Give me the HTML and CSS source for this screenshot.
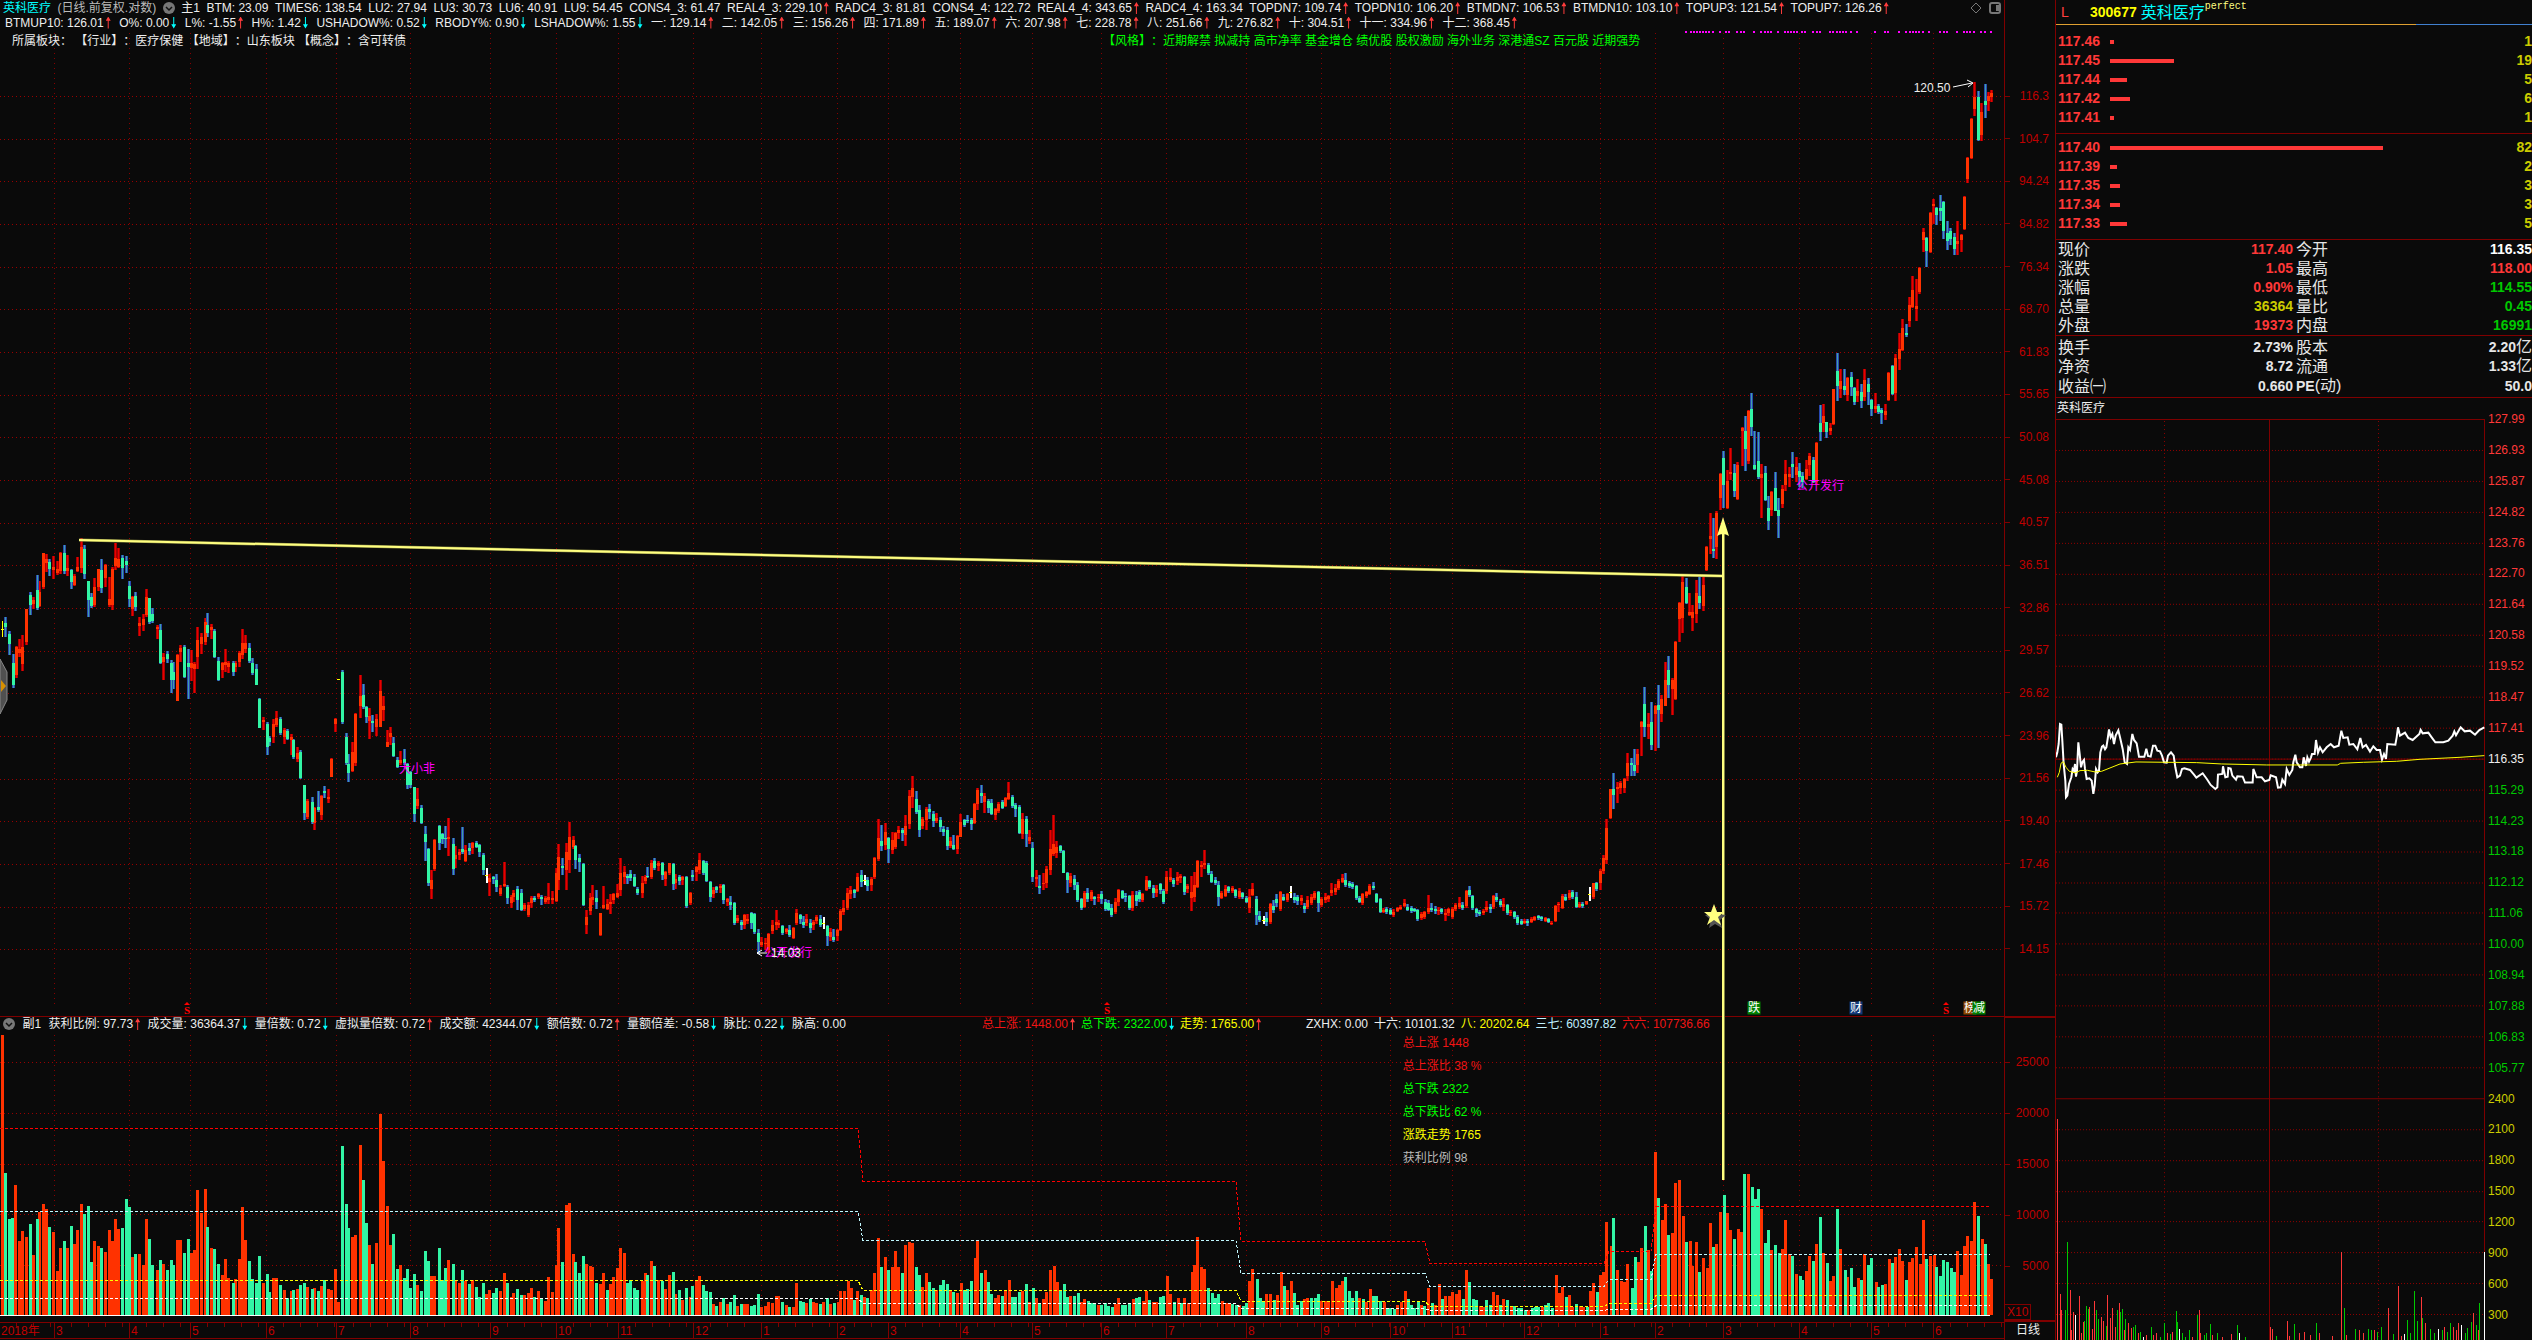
FILE: index.html
```html
<!DOCTYPE html>
<html lang="zh-CN">
<head>
<meta charset="utf-8">
<title>英科医疗 300677 日线</title>
<link rel="stylesheet" href="styles.css">
</head>
<body>
<main class="main">
  <section class="price">
    <header class="bar">
      <div class="readings top"><b class="stock">英科医疗</b><span class="soft">(日线.前复权.对数)</span><button class="fold" aria-label="主图指标"><svg viewBox="0 0 12 12"><circle cx="6" cy="6" r="6" fill="#777"/><path d="M3 5l3 3 3-3" fill="none" stroke="#111" stroke-width="1.5"/></svg></button><span>主1</span><span>BTM: 23.09</span><span>TIMES6: 138.54</span><span>LU2: 27.94</span><span>LU3: 30.73</span><span>LU6: 40.91</span><span>LU9: 54.45</span><span>CONS4_3: 61.47</span><span>REAL4_3: 229.10<i class="up"></i></span><span>RADC4_3: 81.81</span><span>CONS4_4: 122.72</span><span>REAL4_4: 343.65<i class="up"></i></span><span>RADC4_4: 163.34</span><span>TOPDN7: 109.74<i class="up"></i></span><span>TOPDN10: 106.20<i class="up"></i></span><span>BTMDN7: 106.53<i class="up"></i></span><span>BTMDN10: 103.10<i class="up"></i></span><span>TOPUP3: 121.54<i class="up"></i></span><span>TOPUP7: 126.26<i class="up"></i></span></div>
      <div class="tools">
        <button aria-label="标记"><svg viewBox="0 0 12 12"><path d="M6 1l5 5-5 5-5-5z" fill="none" stroke="#777"/></svg></button>
        <button aria-label="侧栏"><svg viewBox="0 0 12 12"><rect x="1" y="1" width="10" height="10" rx="2" fill="none" stroke="#777" stroke-width="2"/><path d="M7 3h3v6h-3z" fill="#777"/></svg></button>
      </div>
      <div class="readings second"><span>BTMUP10: 126.01<i class="up"></i></span><span>O%: 0.00<i class="down"></i></span><span>L%: -1.55<i class="up"></i></span><span>H%: 1.42<i class="down"></i></span><span>USHADOW%: 0.52<i class="down"></i></span><span>RBODY%: 0.90<i class="down"></i></span><span>LSHADOW%: 1.55<i class="down"></i></span><span>一: 129.14<i class="up"></i></span><span>二: 142.05<i class="up"></i></span><span>三: 156.26<i class="up"></i></span><span>四: 171.89<i class="up"></i></span><span>五: 189.07<i class="up"></i></span><span>六: 207.98<i class="up"></i></span><span>七: 228.78<i class="up"></i></span><span>八: 251.66<i class="up"></i></span><span>九: 276.82<i class="up"></i></span><span>十: 304.51<i class="up"></i></span><span>十一: 334.96<i class="up"></i></span><span>十二: 368.45<i class="up"></i></span></div>
    </header>
    <div class="plot">
      <svg id="price" class="chart" viewBox="0 30 2004 986" preserveAspectRatio="none"></svg>
      <div class="sector"><span>所属板块： 【行业】：医疗保健 【地域】：山东板块 【概念】：含可转债</span><span class="lime">【风格】：近期解禁 拟减持 高市净率 基金增仓 绩优股 股权激励 海外业务 深港通SZ 百元股 近期强势</span></div>
      <div id="notes"></div>
    </div>
  </section>
  <ol class="axis" id="priceAxis"></ol>

  <section class="volume">
    <svg id="volume" class="chart" viewBox="0 1016 2004 306" preserveAspectRatio="none"></svg>
    <div class="sub">
      <div class="readings"><button class="fold" aria-label="副图指标"><svg viewBox="0 0 12 12"><circle cx="6" cy="6" r="6" fill="#777"/><path d="M3 5l3 3 3-3" fill="none" stroke="#111" stroke-width="1.5"/></svg></button><span>副1</span><span>获利比例: 97.73<i class="up"></i></span><span>成交量: 36364.37<i class="down"></i></span><span>量倍数: 0.72<i class="down"></i></span><span>虚拟量倍数: 0.72<i class="up"></i></span><span>成交额: 42344.07<i class="down"></i></span><span>额倍数: 0.72<i class="up"></i></span><span>量额倍差: -0.58<i class="down"></i></span><span>脉比: 0.22<i class="down"></i></span><span>脉高: 0.00</span></div>
      <div class="readings trend"><span class="red">总上涨: 1448.00<i class="up"></i></span><span class="lime">总下跌: 2322.00<i class="down"></i></span><span class="yellow">走势: 1765.00<i class="up"></i></span></div>
      <div class="readings levels"><span>ZXHX: 0.00</span><span>十六: 10101.32</span><span class="yellow">八: 20202.64</span><span class="ice">三七: 60397.82</span><span class="red">六六: 107736.66</span></div>
    </div>
    <ul class="summary">
      <li class="red">总上涨 1448</li><li class="red">总上涨比 38 %</li><li class="lime">总下跌 2322</li><li class="lime">总下跌比 62 %</li><li class="yellow">涨跌走势 1765</li><li class="grey">获利比例 98</li>
    </ul>
  </section>
  <div class="axis volaxis"><ol><li>25000</li><li>20000</li><li>15000</li><li>10000</li><li>5000</li></ol><span class="unit">X10</span></div>

  <ol class="dates" id="dates"></ol>
  <div class="period">日线</div>
</main>

<aside class="quote">
  <header class="name"><span class="flag">L</span><strong>300677</strong><h1>英科医疗</h1><sup>perfect</sup></header>
  <ul class="book" id="asks"></ul>
  <ul class="book" id="bids"></ul>
  <table class="stats">
    <tbody>
      <tr><th>现价</th><td class="r">117.40</td><th>今开</th><td class="w">116.35</td></tr>
      <tr><th>涨跌</th><td class="r">1.05</td><th>最高</th><td class="r">118.00</td></tr>
      <tr><th>涨幅</th><td class="r">0.90%</td><th>最低</th><td class="g">114.55</td></tr>
      <tr><th>总量</th><td class="y">36364</td><th>量比</th><td class="g">0.45</td></tr>
      <tr><th>外盘</th><td class="r">19373</td><th>内盘</th><td class="g">16991</td></tr>
    </tbody>
    <tbody class="basics">
      <tr><th>换手</th><td>2.73%</td><th>股本</th><td>2.20<span>亿</span></td></tr>
      <tr><th>净资</th><td>8.72</td><th>流通</th><td>1.33<span>亿</span></td></tr>
      <tr><th>收益㈠</th><td>0.660</td><th><b>PE</b>(动)</th><td>50.0</td></tr>
    </tbody>
  </table>
  <h2>英科医疗</h2>
  <div class="intraday">
    <svg id="intraday" class="chart" viewBox="2056 418 429 922" preserveAspectRatio="none"></svg>
    <ol id="intradayAxis"></ol>
  </div>
</aside>
<script src="chart.js"></script>
</body>
</html>
```
FILE: styles.css
```css
* { box-sizing: border-box; margin: 0; padding: 0; }
html, body { height: 100%; }
body {
  display: grid;
  grid-template-columns: minmax(0, 1fr) 477px;
  background: #0a0a0a;
  color: #eee;
  font: 12px/14px "Liberation Sans", "Noto Sans CJK SC", sans-serif;
  overflow: hidden;
}
ol, ul { list-style: none; }
button { background: none; border: 0; color: inherit; }
.red { color: #f01414; }
.lime { color: #0f0; }
.yellow { color: #ff0; }
.ice { color: #c0f0ff; }
.grey { color: #bbb; }

.main {
  display: grid;
  grid-template-columns: minmax(0, 1fr) 51px;
  grid-template-rows: minmax(0, 1016fr) minmax(0, 306fr) 18px;
  height: 100vh;
  min-width: 0;
}
.price { display: flex; flex-direction: column; min-height: 0; }
.bar {
  display: grid;
  grid-template-columns: minmax(0, 1fr) auto;
  height: 30px;
  padding: 1px 3px 0;
}
.readings { display: flex; align-items: center; gap: 7px; height: 14px; white-space: nowrap; }
.readings.top { gap: 4px; width: 1886px; justify-content: space-between; }
.readings.second { width: 1514px; justify-content: space-between; padding-left: 2px; }
.stock { color: #0ff; font-weight: 400; }
.soft { color: #bbb; }
.fold { width: 12px; height: 12px; flex: none; }
.fold svg, .tools svg { display: block; width: 12px; height: 12px; }
.tools { display: flex; gap: 7px; padding: 1px 0; }
.up, .down {
  display: inline-block;
  width: 5px;
  height: 12px;
  margin-left: 2px;
  vertical-align: -2px;
}
.up { background: #ff3c3c; clip-path: polygon(50% 0, 100% 35%, 60% 35%, 60% 100%, 40% 100%, 40% 35%, 0 35%); }
.down { background: #0ff; clip-path: polygon(40% 0, 60% 0, 60% 65%, 100% 65%, 50% 100%, 0 65%, 40% 65%); }

.plot, .volume { display: grid; position: relative; min-height: 0; flex: 1; grid-template: minmax(0, 1fr) / minmax(0, 1fr); }
.plot > *, .volume > * { grid-area: 1 / 1; }
.chart { display: block; width: 100%; height: 100%; min-height: 0; min-width: 0; }
.sector {
  display: grid;
  grid-template-columns: 1091fr 901fr;
  align-self: start;
  padding: 4px 0 0 12px;
  white-space: pre;
  text-spacing-trim: space-all;
}
.note { position: absolute; white-space: nowrap; transform: translate(-50%, -50%); }
.note.tag { width: 13px; height: 13px; line-height: 13px; color: #fff; text-align: center; }
.note.signal { color: #f00; font: bold 11px/10px "Liberation Serif", serif; }
.magenta { color: #f0f; }
.green { background: #008000; }
.navy { background: #103878; }
.brown { background: #904800; }

.axis { border-left: 1px solid #800000; color: #c00000; }
#priceAxis {
  display: flex;
  flex-direction: column;
  justify-content: space-between;
  padding: 89px 6px 60px 0;
  text-align: right;
}
.axis li { display: flex; justify-content: space-between; align-items: center; }
.axis li::before { content: ""; width: 5px; height: 1px; background: #800000; }
.volaxis {
  display: flex;
  flex-direction: column;
  justify-content: space-between;
  border: 1px solid #800000;
  border-width: 2px 0 2px 1px;
}
.volaxis ol { display: flex; flex-direction: column; gap: 37px; padding: 37px 6px 0 0; }
.unit { align-self: flex-start; border: 1px solid #800000; border-left: 0; padding: 0 2px; }

.sub {
  display: grid;
  grid-template-columns: 979fr 324fr 698fr;
  align-self: start;
  padding: 1px 0 0 3px;
}
.sub .readings { gap: 6px; }
.sub .readings:first-child { width: 843px; gap: 0; justify-content: space-between; }
.volume { box-shadow: inset 0 1px #800000; }
.summary {
  display: grid;
  gap: 9px;
  align-self: start;
  margin: 20px 0 0 70%;
}
.dates {
  display: grid;
  height: 17px;
  border: solid #800000;
  border-width: 1px 0;
  color: #c00000;
}
.dates li {
  border-left: 1px solid #800000;
  padding-left: 1px;
  line-height: 16px;
  background: linear-gradient(90deg, transparent 16px, #800000 16px) 0 0 / 17px 4px repeat-x;
  white-space: nowrap;
}
.dates li:first-child { border-left: 0; }
.period { border-left: 1px solid #800000; padding-left: 11px; line-height: 16px; }

.quote {
  display: flex;
  flex-direction: column;
  height: 100vh;
  border-left: 1px solid #800000;
  font: 14px/19px "Liberation Sans", "Noto Sans CJK SC", sans-serif;
}
.name {
  display: flex;
  align-items: center;
  flex: none;
  height: 25px;
  padding-left: 5px;
  border-bottom: 1px solid;
  border-image: linear-gradient(90deg, #e0a030 359px, #4080d0 359px) 1;
}
.flag { width: 29px; color: #ff4040; }
.name strong { color: #ff0; }
.name h1 { margin-left: 4px; color: #0ff; font-size: 16px; font-weight: 400; }
.name sup { color: #ffff80; font: 10px/14px "Liberation Mono", monospace; align-self: flex-start; }
.book {
  padding: 7px 0 6px 2px;
  border-bottom: 1px solid #800000;
  font-weight: 700;
  color: #ff3838;
}
.book + .book { padding: 4px 0 6px 2px; }
.book li { display: grid; grid-template-columns: 52px 1fr auto; align-items: center; height: 19px; }
.bar-size { height: 4px; background: #ff3838; }
.book output { color: #cc0; }
.stats { width: 100%; border-spacing: 0; table-layout: fixed; }
.stats tr { height: 19px; line-height: 19px; }
.stats tr:last-child > * { border-bottom: 1px solid #800000; }
.stats .basics tr:first-child > * { padding-top: 2px; }
.stats .basics tr:last-child > * { padding-bottom: 1px; }
.stats th { width: 78px; padding-left: 2px; text-align: left; font-size: 16px; font-weight: 400; color: #e6e6e6; white-space: nowrap; }
.stats th b { font-size: 14px; }
.stats td { text-align: right; font-weight: 700; color: #e6e6e6; }
.stats td:nth-child(2) { padding-right: 1px; }
.stats td span { font-size: 16px; font-weight: 400; line-height: 16px; }
.stats .r { color: #ff3838; }
.stats .g { color: #00c800; }
.stats .y { color: #cc0; }
.stats .w { color: #fff; }
.quote h2 { flex: none; height: 21px; padding-left: 1px; font-size: 12px; line-height: 21px; font-weight: 400; }
.intraday {
  display: grid;
  grid-template: minmax(0, 1fr) / minmax(0, 1fr) 47px;
  flex: 1;
  min-height: 0;
}
#intradayAxis {
  display: flex;
  flex-direction: column;
  justify-content: space-between;
  margin-top: -7px;
  padding: 0 0 18px 3px;
  font-size: 12px;
  line-height: 14px;
}
#intradayAxis .r { color: #ff3838; }
#intradayAxis .g { color: #00c800; }
#intradayAxis .y { color: #cc0; }
```
FILE: chart.js
```js
const byId = id => document.getElementById(id);

// Each run: origin, units per pixel, then "colour+x high bodyTop bodyBottom low".
// Colour w is a flat day: "w+x high low".
const candleRuns = [
  { x: 0, y: 500, kx: 1.823, ky: 3, data: "y4 363 410,g10 350 370 382 412,g16 392 402 432 465,g23 462 490 556 563,r29 438 440 525 533,r34 417 447 458 470,r41 405 440 492 512,r47 326 328 425 434,g54 276 285 315 345,r60 290 300 312 328,g67 225 270 323 330,r72 243 276 318 321,r78 158 160 262 266,r84 162 178 190 215,g90 177 185 208 228,r97 168 201 210 237,r103 183 207 219 226,r110 155 160 214 222,g116 134 160 212 221,r123 165 203 213 228,g129 207 210 245 267,r135 222 228 254 258,r141 170 200 213 216,r147 115 140 203 218,g154 134 147 222 236,g160 242 244 300 350,g166 280 292 319 324,r172 234 261 316 321,r178 207 207 262 273,g185 177 210 263 278,r191 192 195 233 262,r198 230 297 314 320,r204 200 207 316 330,r210 129 175 198 210,r216 145 178 200 205,g223 165 175 205 237,g229 168 184 195 219,g235 243 258 296 321,r241 288 290 328 347,g247 276 289 320 333,r254 350 368 377 408,r260 342 356 375 392,r267 267 291 344 350,g272 293 295 365 372,g278 323 342 363 370,r286 374 380 388 416,g291 372 390 488 492,r298 458 470 485 540,g304 453 462 476 490,g311 480 490 540 580,g316 487 517 540 567,r323 462 465 603 603,r329 434 444 455 487,g335 434 440 530 533,g342 446 490 502 597,r348 449 490 505 542,r354 486 492 508 579,r360 381 420 470 508,r367 399 410 432 461,r373 354 366 425 434,g378 339 375 398 410,r385 372 382 390 416,g391 387 392 472 474,g398 471 484 540 542,r404 486 490 510 534,r410 447 485 494 517,r416 483 490 500 518,g424 483 490 516 528,r429 483 488 500 517,r435 453 459 487 501,r442 387 430 464 476,r447 405 428 448 460,g454 428 444 484 489,g460 474 488 520 526,g467 491 508 554 554,g473 593 596 683 684,r479 651 660 667 690,g486 665 672 740 765,g491 708 713 725 737,r498 657 672 712 730,r504 633 655 674 681,g511 651 657 698 704,r517 684 690 710 731,g523 686 694 717 720,r530 702 711 720 765,g535 716 719 772 776,r542 741 760 778 785,g547 750 757 833 837,g555 855 856 940 960,r560 897 902 950 956,g568 891 906 966 972,r573 921 925 968 990,g579 873 921 930 936,r586 885 887 945 960,g591 858 873 880 893,r598 867 891 898 908,r604 773 776 830 831,r611 653 656 672 695,y617 537 540,g624 510 515 665 671,g630 699 712 788 795,g635 762 792 820 846,r642 726 755 812 816,r648 639 641 790 797,r656 525 588 617 654,g661 551 584 620 627,g668 617 620 650 668,r673 624 647 662 717,g679 645 663 670 695,r686 642 657 680 708,r692 540 573 680 681,r698 588 618 630 664,r705 690 727 740 741,r711 681 700 711 735,g717 711 728 767 771,g724 770 780 800 804,r730 752 780 790 795,g736 747 778 790 794,g742 789 792 855 867,g748 813 815 855 863,g755 860 862 942 966,r761 863 898 918 928,g768 914 925 970 972,g774 978 1003 1025 1083,g780 1043 1047 1150 1158,r786 1110 1140 1168 1197,r792 1017 1019 1108 1113,g800 974 978 1030 1050,g805 999 1003 1018 1033,g812 978 1013 1015 1044,r817 954 1010 1018 1068,g825 1013 1032 1108 1125,r830 1038 1065 1078 1104,r836 1047 1055 1065 1080,g843 981 1047 1057 1063,r848 1036 1050 1083 1087,g855 1028 1045 1053 1065,r861 1025 1030 1045 1062,g868 1022 1030 1040 1044,g874 1032 1035 1055 1071,g880 1059 1065 1110 1125,w886 1104 1149,r892 1121 1135 1146 1188,g899 1128 1130 1137 1152,g905 1122 1140 1160 1175,r912 1155 1165 1182 1187,r918 1086 1153 1157 1162,g925 1155 1160 1195 1212,r931 1184 1190 1210 1224,r936 1170 1180 1190 1206,g943 1158 1168 1200 1230,g949 1167 1180 1230 1233,r956 1209 1215 1228 1233,r962 1206 1215 1245 1251,r968 1188 1193 1208 1225,g974 1188 1193 1200 1205,r980 1179 1183 1190 1197,g987 1184 1190 1198 1215,r993 1188 1195 1205 1211,r999 1149 1190 1200 1212,r1006 1173 1193 1200 1211,r1013 1104 1120 1204 1206,r1018 1032 1071 1140 1170,g1025 1073 1097 1105 1125,r1031 1029 1055 1110 1170,r1037 966 1010 1080 1119,r1044 1008 1020 1040 1047,g1049 1034 1038 1080 1107,g1056 1062 1073 1085 1117,g1062 1089 1092 1215 1218,r1069 1230 1250 1275 1302,r1075 1179 1195 1233 1245,r1080 1155 1190 1200 1215,g1087 1170 1195 1205 1228,r1093 1239 1240 1305 1308,r1100 1158 1215 1225 1228,r1106 1197 1212 1228 1231,r1112 1182 1205 1213 1243,r1118 1179 1183 1200 1212,r1125 1152 1180 1190 1194,r1131 1074 1120 1170 1188,r1137 1098 1116 1130 1152,g1143 1122 1127 1135 1152,g1149 1110 1122 1135 1143,g1156 1122 1130 1158 1162,g1162 1161 1166 1180 1185,r1170 1129 1150 1180 1194,r1175 1126 1130 1143 1152,g1180 1101 1128 1131 1135,r1187 1080 1090 1130 1137,g1193 1074 1082 1105 1110,r1200 1083 1088 1097 1113,g1206 1086 1090 1125 1140,r1213 1113 1117 1138 1158,r1219 1089 1090 1120 1125,g1226 1088 1092 1152 1170,r1231 1122 1138 1148 1168,g1237 1125 1132 1143 1155,r1243 1128 1130 1140 1155,g1250 1128 1132 1218 1224,r1257 1176 1180 1210 1214,g1262 1110 1125 1130 1143,r1269 1098 1102 1115 1142,r1275 1059 1080 1110 1123,g1281 1080 1083 1118 1125,g1287 1083 1090 1143 1145,g1294 1143 1145 1192 1206,r1300 1161 1170 1182 1195,g1306 1158 1162 1170 1180,r1312 1152 1158 1165 1178,g1318 1152 1155 1200 1211,r1326 1194 1197 1205 1218,g1331 1187 1205 1215 1231,g1338 1206 1209 1268 1275,r1344 1245 1254 1262 1268,g1350 1260 1265 1275 1290,r1357 1242 1245 1275 1287,r1362 1242 1257 1264 1272,g1369 1236 1240 1268 1287,g1375 1239 1242 1297 1302,g1381 1287 1298 1325 1362,r1388 1311 1325 1335 1340,r1394 1314 1328 1333 1350,r1400 1300 1302 1350 1360,r1407 1260 1275 1293 1302,r1414 1230 1265 1275 1290,r1419 1260 1268 1275 1283,g1426 1275 1278 1300 1305,r1432 1285 1288 1297 1303,g1438 1275 1290 1305 1310,r1445 1282 1284 1313 1316,r1451 1227 1240 1270 1275,g1458 1242 1246 1256 1272,g1463 1248 1265 1275 1284,r1470 1242 1258 1268 1278,g1476 1256 1270 1285 1299,r1482 1260 1265 1275 1290,r1488 1245 1252 1262 1272,g1494 1245 1258 1275 1280,w1500 1251 1287,g1507 1275 1278 1308 1338" },
  { x: 830, y: 750, kx: 3, ky: 3, data: "r1 533 545 562 573,g10 537 560 571 575,r22 536 540 558 573,r31 477 482 541 543,r40 450 475 487 495,r52 414 430 475 480,r61 408 420 432 446,g73 417 420 428 444,r82 369 380 424 426,g94 360 376 395 410,w102 375 405,g112 381 390 408 423,r124 381 387 404 423,r133 320 325 380 386,r145 207 263 328 333,g154 225 273 288 302,r166 219 246 285 299,g175 261 263 298 339,r187 246 270 300 311,r196 246 248 292 298,r205 228 240 250 266,g217 234 240 248 273,r226 195 228 255 287,r238 120 138 222 237,r247 78 114 142 173,g259 123 147 186 192,g268 165 180 240 261,r277 201 207 228 238,r289 171 177 210 239,g298 162 177 186 207,g310 183 192 214 231,r319 189 203 212 218,g331 201 210 232 246,g340 228 238 246 258,g352 231 240 288 300,r361 261 272 288 294,g370 255 286 298 300,r382 255 258 298 311,r391 191 215 260 262,g403 206 210 226 231,g412 195 209 213 220,g424 204 210 222 239,r433 159 162 220 222,r442 114 120 163 179,g454 105 129 138 158,r463 129 138 155 190,g475 147 153 173 188,g484 147 160 192 195,r496 174 178 196 210,r505 156 162 182 188,g517 150 157 175 178,r526 140 144 167 170,r535 96 129 148 150,g547 135 140 168 175,g556 159 165 176 201,g568 165 172 250 252,r577 189 207 252 267,g589 198 207 252 291,r598 240 262 272 281,g607 276 294 382 396,r619 360 380 386 410,g628 375 408 414 432,r640 369 398 402 420,r649 348 358 400 414,r661 240 297 360 375,r670 195 282 312 318,r679 273 290 310 323,g691 285 288 303 308,g700 300 303 368 369,g712 366 370 390 429,r721 369 378 400 411,g733 375 388 405 420,g742 396 405 450 455,g754 444 448 475 480,r763 423 430 470 473,g772 414 430 446 456,r784 420 426 448 452,g793 438 440 448 465,r805 432 440 445 455,g814 423 432 447 462,g826 447 455 478 483,g835 450 460 480 483,g844 462 475 495 501,r856 444 456 486 491,r865 417 420 455 467,g877 420 422 444 447,g886 430 438 442 455,g898 435 438 475 480,r907 423 436 475 483,g919 423 435 452 468,g928 420 425 446 455,r937 429 432 450 455,r949 378 390 420 423,g958 390 392 410 416,g970 405 415 430 444,r979 405 416 428 441,g991 399 403 420 432,g1000 417 422 455 462,r1009 363 380 424 432,r1021 354 380 390 396,g1030 384 390 403 410,r1042 366 380 393 405,r1051 372 378 385 399,g1063 378 380 425 435,r1072 402 408 416 428,r1084 378 426 445 483,r1093 366 405 440 455,r1102 330 333 410 414,r1114 333 345 350 381,r1123 300 340 346 357,g1135 339 345 370 375,g1144 363 372 396 399,g1156 381 390 400 404,g1165 393 405 440 468,r1174 423 430 445 448,r1186 405 418 438 441,g1195 408 412 422 429,r1207 408 415 423 428,g1216 417 420 438 444,r1228 414 423 440 446,g1237 426 430 440 446,g1249 438 444 455 459,r1258 417 440 475 488,r1267 399 416 436 438,g1279 438 446 495 525,g1288 483 498 510 516,w1299 498 522,g1309 486 503 516 527,r1321 459 461 515 521,g1330 450 468 480 488,g1339 432 447 460 470" },
  { x: 1280, y: 560, kx: 3, ky: 3, data: "r1 993 997 1048 1053,g10 1002 1012 1020 1023,r22 999 1003 1020 1025,w30 978 1014,g43 999 1010 1020 1030,g52 1005 1012 1022 1035,r64 1005 1015 1022 1035,g73 1029 1038 1047 1059,r82 1008 1020 1040 1047,r94 1003 1010 1028 1036,r103 993 998 1015 1020,g115 993 997 1030 1056,r124 1011 1018 1035 1041,r136 1000 1012 1020 1029,r145 1005 1009 1018 1025,r154 969 990 1000 1007,r166 972 985 997 1005,r175 957 962 985 990,r187 942 955 965 968,g196 939 960 975 981,g208 963 970 978 984,g217 966 973 980 988,g229 975 978 1015 1020,g238 1008 1015 1025 1029,r247 999 1001 1030 1035,r259 993 997 1007 1013,r268 972 978 1003 1006,g280 966 978 985 990,g289 999 1003 1025 1029,g301 1014 1018 1055 1059,r310 1044 1050 1056 1060,g319 1040 1046 1056 1063,g331 1044 1050 1062 1066,r340 1046 1055 1065 1071,r352 1040 1044 1053 1056,r361 1036 1040 1047 1051,r373 1017 1028 1038 1042,g382 1033 1040 1050 1054,g394 1038 1043 1052 1058,g403 1044 1048 1053 1057,g412 1047 1050 1078 1083,r424 1055 1062 1075 1080,r433 1053 1056 1070 1077,r445 1005 1045 1055 1062,g454 1029 1045 1050 1055,g466 1038 1047 1053 1063,r475 1040 1050 1053 1064,g484 1043 1047 1055 1062,r496 1047 1060 1065 1083,r505 1044 1048 1060 1067,r517 1041 1048 1072 1077,r526 1029 1035 1048 1053,r538 1011 1030 1042 1047,g547 1026 1035 1045 1050,r559 990 993 1038 1045,g568 978 990 1005 1010,g577 1005 1008 1043 1050,g589 1043 1048 1060 1071,g598 1050 1055 1063 1067,r610 1047 1053 1060 1066,r619 1023 1040 1050 1055,g631 1032 1040 1048 1059,r640 1005 1008 1040 1046,g649 999 1010 1020 1025,g661 1017 1022 1035 1042,r670 1014 1033 1040 1054,g682 1032 1035 1060 1065,r691 1050 1055 1060 1067,g703 1053 1055 1070 1077,g712 1065 1070 1090 1095,g724 1078 1084 1091 1095,r733 1078 1084 1088 1092,g742 1078 1083 1090 1098,r754 1071 1078 1085 1090,r763 1068 1070 1080 1083,g775 1065 1068 1075 1080,g784 1068 1072 1078 1082,r796 1070 1075 1083 1087,g805 1074 1078 1085 1088,r814 1084 1088 1093 1095,r826 1035 1037 1082 1086,r835 1026 1032 1036 1055,r847 1002 1008 1045 1047,g856 1002 1010 1020 1023,r868 990 998 1015 1020,g877 990 995 1010 1017,g889 996 1010 1040 1044,r898 1025 1032 1042 1045,g907 1025 1033 1038 1043,r919 1022 1024 1032 1036,w927 981 1023,r940 968 970 1012 1017,g949 966 970 988 993,r961 927 932 970 991,r970 885 893 932 942,r979 777 804 900 911,r991 686 688 775 777,g1000 639 686 705 747,r1012 666 680 688 729,r1021 663 668 683 702,r1033 655 658 684 699,r1042 579 608 648 663,g1054 594 608 615 648,g1063 567 614 632 648,r1072 567 582 616 639,r1084 482 485 500 588,g1093 381 432 500 531,r1105 459 492 502 537,g1114 426 486 556 570,r1126 434 437 462 573,g1135 375 435 450 564,r1144 405 418 462 486,r1156 306 360 437 439,g1165 288 330 375 413,r1177 354 360 387 465,r1186 243 245 418 420,r1198 126 128 178 246,r1207 48 66 174 219,g1219 54 80 130 132,r1228 99 156 164 168,r1237 135 157 173 213,r1249 60 100 163 189,g1258 48 108 128 147,r1270 50 75 138 153" },
  { x: 1640, y: 40, kx: 3, ky: 2.613, data: "r199 1322 1325 1384 1387,r211 1236 1297 1303 1342,g220 1249 1330 1335 1354,r229 1232 1235 1325 1355,r241 1132 1134 1197 1229,g250 1074 1092 1162 1222,r262 1124 1152 1224 1226,r271 1066 1130 1133 1149,g283 1108 1132 1178 1193,r292 1103 1110 1200 1202,r305 1010 1013 1022 1113,g314 983 1021 1070 1125,r323 967 970 1100 1107,g334 923 964 1010 1034,g343 1021 1110 1122 1124,g355 1024 1100 1143 1146,r364 1107 1133 1144 1248,g376 1113 1132 1203 1205,g385 1192 1222 1256 1280,r394 1178 1180 1228 1243,g406 1130 1170 1230 1231,g415 1197 1228 1243 1300,r427 1163 1172 1213 1222,r436 1098 1133 1163 1178,r448 1116 1134 1143 1167,g457 1077 1107 1117 1145,r469 1090 1117 1136 1155,g478 1105 1127 1141 1168,g487 1129 1139 1155 1170,r499 1098 1120 1148 1150,r508 1079 1087 1110 1140,g520 1090 1098 1155 1158,r529 1050 1052 1155 1162,g541 955 1001 1023 1047,r550 951 983 1002 1023,g559 997 999 1024 1040,r571 1001 1014 1022 1031,r580 911 913 1004 1006,g592 818 865 903 942,r601 860 891 911 936,g613 860 904 915 928,r622 880 882 927 943,g634 868 880 908 930,g643 907 909 945 953,r652 885 918 930 946,g664 898 919 943 962,r673 860 889 932 943,g685 883 899 920 953,g694 937 940 964 983,r706 923 957 963 975,g715 951 956 973 976,g724 961 966 975 1003,r736 951 969 980 993,r745 867 869 940 943,g757 849 851 925 928,r766 821 831 922 943,r778 766 807 833 862,r787 729 753 811 813,g799 742 765 771 775,r808 672 693 733 749,r817 616 653 697 700,r829 625 695 702 733,r838 593 595 658 665,r850 491 501 523 553,g859 516 518 551 593,r871 449 451 555 557,r880 416 428 434 481,g889 436 439 457 483,g901 405 438 446 473,g910 420 424 500 519,g922 473 504 524 549,g931 491 500 520 535,g943 504 516 545 563,r952 473 525 534 561,r964 506 510 522 553,r973 407 409 493 496,r982 307 309 362 374,r994 205 207 308 311,r1003 110 149 180 198,g1015 133 149 261 263,r1024 165 187 247 263,g1036 115 159 170 203,r1045 136 146 160 185,r1054 131 139 149 163" }
];

// Each run: origin, units per pixel, then "x colour top".
const volumeRuns = [
  { x: 0, y: 980, kx: 1.823, ky: 3, data: "4r165,10g579,16g717,22g714,28r615,34r783,41r753,47r771,54g732,60r825,67g717,72r696,78r672,84r687,90g741,97r756,103r873,110r804,116g783,123r804,129g738,135r792,141r750,147r672,154g702,160g678,166g846,172r783,178r798,185g804,191r816,198r750,204r783,210r717,216r747,223g744,229g657,235g681,241r831,247g822,254r822,260r855,267r717,272g777,278g855,286r870,291g840,298r852,304g870,311g840,316g855,323r780,329r780,335g819,342g777,348r819,354r810,360r630,367r699,373r627,378g741,385r804,391g807,398g852,404r885,410r837,416r894,424g909,429r897,435r837,442r681,447r780,454g843,460g897,467g909,473g828,479r909,486g882,491g936,498r894,504r894,511g915,517r930,523g954,530r933,535g930,542r927,547g915,555g909,560r921,568g927,573r924,579g933,586r918,591g900,598r927,604r930,611r867,617r966,624g498,630g672,635g744,642r771,648r765,656r495,661g600,668g729,673r795,679g852,686r789,692r402,698r543,705r678,711r795,717g762,724g867,730r855,736g894,742g867,748g924,755g882,761r915,768g933,774g813,780g843,786r888,792r888,800g804,805g900,812g864,817r840,825g852,830r903,836r909,843g870,848r903,855g912,861r900,868g921,874g951,880g909,886r942,892r930,899g939,905g924,912r933,918r879,925g909,931r951,936r939,943g927,949g945,956r945,962r939,968r924,974g951,980r933,987g954,993r963,999r891,1006r936,1013r855,1018r744,1025g846,1031r675,1037r669,1044r822,1049g846,1056g879,1062g828,1069r852,1075r858,1080r861,1087g909,1093r912,1100r879,1106g930,1112r912,1118r891,1125r864,1131r804,1137r819,1143g909,1149g900,1156g924,1162g930,1170r903,1175r879,1180g885,1187r843,1193g858,1200r900,1206g903,1213r927,1219r885,1226g876,1231r942,1237g930,1243r960,1250g924,1257r951,1262g918,1269r903,1275r888,1281g915,1287g933,1294g936,1300r972,1306g978,1312r966,1318g954,1326r972,1331g966,1338g945,1344r978,1350g972,1357r972,1362r972,1369g978,1375g975,1381g942,1388r981,1394r978,1400r966,1407r969,1414r948,1419r948,1426g966,1432r975,1438g981,1445r981,1451r909,1458g963,1463g966,1470r969,1476g957,1482r966,1488r969,1494g972,1500r966,1507g954,1513r972,1520g969,1527r966,1532r933,1538r933,1545r903,1551r924,1557g960,1563r933" },
  { x: 830, y: 980, kx: 3, ky: 3, data: "94g945,102r950,112g955,124r930,133r880,145r775,154g860,166r830,175g870,187r862,196r812,205r860,217g880,226r795,238r785,247r790,259g860,268g885,277r920,289r880,298g905,310g925,319r930,331g915,340g900,352g912,361r930,370g935,382r938" },
  { x: 960, y: 990, kx: 1.912, ky: 3, data: "2r879,8g899,14g897,21g873,28r804,33r750,40g849,47r840,54g876,60g912,67r924,73r915,80g918,86r903,93r870,100g921,106g921,113g906,119r903,126g882,132r936,139g894,145r924,152g939,158r927,165r906,172r840,179r828,185r876,192g903,198g882,205g921,211r918,218g918,225g909,231r936,237r927,244g933,250g939,257g939,264r945,270g945,277g939,283g948,290g951,297r942,303r924,310g945,316g945,323g939,330r927,336g924,343g921,349r933,356r903,362g930,369r936,375r936,382g921,388g918,395r858,402r912,409g936,416r924,422g939,429r924,436r939,443r846,448r825,454r741,461r831,467r837,475g894,481g909,488g924,494g912,501r933,508r939,514r939,521g942,528g945,534r945,541g948,547g939,553r873,559r837,567g867,573g924,580g936,586r912,593r912,600g930,606r915,613r846,619g888,626r900,632r873,639g909,645g945,652g933,658r927,664r924,671g924,678g924,684g912,691r933,698r933,704r933,711r873,718r894,724r885,731r873,737g861,744g903,750g924,757g903,763r924,770g927,776r936,783r897,789g918,796g918,803g933,810r936,816g957,823g954,830g957,836r945,843r936,850r903,856g927,862g945,868g954,875g936,881r945,888g948,895r894,902g939,908r945,915r882,921g927,928r918,935r918,941r906,948r912,954r900,961g927,968r840,974g876,981g927,987g930,994r948,1000r951,1006g930,1013g945,1020r906,1026r915,1033g945,1039r927,1046g930,1053r951,1059g948,1066g954,1073g954,1080g960,1086r960,1093g954,1100g951,1106g951,1113r951,1119g945,1125g939,1132g954,1139r855,1145r909,1151r891,1158g921,1165r915,1171r951,1178g942,1185r948,1191r951,1198g951,1204r903,1211r879,1217g906,1224r855,1230r846,1236r696,1244r768,1249g684,1257r840,1263r873,1270r876,1276r822,1284g894,1290g801,1296r816,1303r774,1309g708,1316r780,1322g843" },
  { x: 1560, y: 980, kx: 1.613, ky: 3, data: "153r516,158g654,164r720,170r672,175g765,181r759,186r609,192r600,198r708,204g786,209r783,213r858,220r786,225g876,231r834,237r864,242r729,247g801,252r792,258r696,264g645,270r699,275r750,281g777,287r747,292r756,297g582,303r582,309g621,314g657,320g627,325r687,331g789,336g750,341r810,347g795,353g819,358r807,363r720,370r822,375g828,381r882,387g888,391g900,397r873,402r828,408g843,413r792,420g711,425r819,430g849,436r903,441r888,447g687,452r807,459g870,463r891,470g864,474g921,480r894,486g900,491r822,497g855,502g834,509r906,513g921,519g915,525r912,530r837,536g849,541r831,547r807,552r843,558g900,563r846,568r834,575r801,580r852,586r720,591g837,597r828,603r825,607g861,613g888,618g840,625g846,630g864,636g876,641r813,647r885,652r798,657r768,663r783,668r666,675g708,680r777,686g792,691r852,696r897" }
];

const minuteVolumes = "802r417,806r942,808r990,814g990,817g786,822r930,825r1050,828r995,831w1005,837r948,840r1060,843r1025,846g1022,849g978,852g988,854r982,858r1048,862r963,865g990,868g1018,872r1010,876r1022,880g1038,883r945,887r1015,891r983,895r1040,899g990,901r969,903g995,906g987,909r1050,912g1018,916r1030,921r1045,925g1040,928g1035,932r1060,936g1055,941w1070,945r1066,953g1040,957r1065,962r1060,968g1070,975g1030,979r1058,984g1062,987r1055,993g993,996g1025,999w1048,1003g1060,1008g1072,1015g1050,1020r1070,1027g1005,1030r990,1033r1060,1038g1065,1042g1060,1048g1032,1052r1065,1060g1060,1068r1070,1082r1062,1092g1035,1096w1060,1105g1070,1145r1040,1148r1048,1155g1068,1172r1022,1176r1068,1184g1032,1192r1060,1200r1055,1210r1065,1220g1028,1225r1060,1245r1068,1260r816,1264g983,1268r1065,1283g1048,1288r1050,1296r1060,1303g1048,1308g1050,1313r1050,1318g1055,1325g1040,1335r985,1343g1062,1352r918,1357r1068,1362w1062,1367g1020,1371g1058,1378g933,1382g1022,1388r951,1391g1015,1396r1028,1404g1048,1410g1060,1417w1048,1422g1050,1426r1040,1430g1055,1436g1030,1440r1040,1445r1050,1448r1028,1454w1035,1459g1060,1463g1045,1469g1025,1473r1000,1477g1035,1481r1050,1483g970";

const intradayPrice = "78,1070 82,1055 86,1030 90,970 94,972 97,1020 101,1090 106,1140 108,1190 112,1185 117,1150 124,1130 128,1105 132,1110 135,1090 138,1128 141,1110 145,1025 149,1060 153,1100 157,1085 162,1078 165,1105 170,1135 178,1133 185,1140 190,1180 194,1155 198,1105 203,1115 207,1110 211,1055 216,1038 220,1035 225,1046 229,1040 233,1015 237,986 242,1010 247,1000 252,1030 257,1005 265,989 270,1010 278,1045 284,1085 291,1090 295,1040 300,1048 307,1000 312,1018 320,1028 327,1068 343,1068 349,1044 354,1066 362,1068 369,1035 376,1035 382,1050 390,1052 396,1065 402,1085 410,1086 414,1065 423,1055 431,1065 436,1100 442,1130 450,1125 456,1105 463,1103 480,1108 492,1122 499,1131 518,1118 531,1136 542,1153 556,1165 562,1160 564,1122 577,1120 579,1097 586,1130 593,1128 595,1102 602,1104 607,1125 618,1137 622,1127 638,1128 645,1146 668,1146 670,1105 680,1130 695,1130 705,1142 718,1138 722,1124 738,1130 744,1161 752,1160 757,1137 765,1150 770,1105 778,1123 787,1108 790,1085 796,1062 800,1085 810,1100 817,1100 821,1070 828,1096 832,1070 837,1083 843,1070 846,1060 854,1060 858,1018 864,1056 870,1040 878,1055 890,1040 902,1030 912,1040 926,1035 934,990 940,1012 953,1010 958,1032 970,1030 982,1046 991,1012 998,1040 1008,1033 1020,1053 1030,1037 1040,1048 1050,1048 1056,1077 1062,1060 1068,1075 1072,1030 1096,1032 1100,1010 1104,980 1110,1005 1125,996 1135,1012 1148,1018 1168,1000 1172,988 1178,998 1195,996 1205,1010 1216,1025 1240,1025 1255,1020 1268,1005 1273,992 1278,1004 1292,980 1304,992 1320,990 1335,1002 1348,988 1363,980";
const intradayAverage = "82,1130 88,1115 93,1088 100,1083 108,1100 118,1112 135,1117 150,1110 172,1109 195,1114 215,1112 240,1102 270,1090 318,1084 500,1086 575,1090 710,1093 922,1093 932,1088 1000,1085 1100,1082 1170,1076 1290,1070 1363,1065";

const months = [[0, "2018年"], [54, 3], [129, 4], [190, 5], [266, 6], [336, 7], [410, 8], [490, 9], [556, 10], [618, 11], [693, 12], [761, 1], [837, 2], [888, 3], [960, 4], [1032, 5], [1101, 6], [1166, 7], [1246, 8], [1321, 9], [1390, 10], [1452, 11], [1524, 12], [1600, 1], [1655, 2], [1723, 3], [1799, 4], [1871, 5], [1933, 6]];

const rect = (x, y, w, y2) => `M${x} ${y}h${w}V${Math.max(y2, y + 1)}h${-w}z`;
const path = (d, fill) => `<path d="${d}" fill="${fill}" shape-rendering="crispEdges"/>`;
const line = (x1, y1, x2, y2, color = "#800000", extra = "") =>
  `<path d="M${x1} ${y1}L${x2} ${y2}" stroke="${color}" fill="none" ${extra}/>`;
const DOTS = 'stroke-dasharray="1 3" shape-rendering="crispEdges"';
const SPARSE = 'stroke-dasharray="1 4" shape-rendering="crispEdges"';

function drawPrice() {
  let out = "";
  for (let i = 0; i < 21; i++) {
    const y = Math.round(96 + i * 42.66) + .5;
    out += line(0, y, 2004, y, "#980000", DOTS);
  }
  months.slice(1).forEach(([x]) => out += line(x + .5, 33, x + .5, 1004, "#880000", SPARSE));
  const d = { rw: "", rc: "", rb: "", gw: "", gc: "", gb: "", w: "", y: "" };
  for (const run of candleRuns) for (const item of run.data.split(",")) {
    const color = item[0];
    const [x0, ...rest] = item.slice(1).split(" ").map(Number);
    const x = Math.round(run.x + x0 / run.kx) - 1;
    const ys = rest.map(v => Math.round(run.y + v / run.ky));
    if (ys.length === 2) {
      d[color] += rect(x + 1, ys[0], color === "y" ? 1 : 2, ys[1]);
      d.y += rect(x, (ys[0] + ys[1]) >> 1, 3, 0);
      continue;
    }
    d[color + "w"] += rect(x, ys[0], 3, ys[3]);
    d[color + "c"] += rect(x + 1, ys[0], 1, ys[3]);
    d[color + "b"] += rect(x, ys[1], 3, ys[2]);
  }
  out += path(d.rw, "#a80000") + path(d.rc, "#e80000") + path(d.gw, "#2848b0") + path(d.gc, "#40a0a8") +
    path(d.rb, "#ff3200") + path(d.gb, "#32f5a5") + path(d.w, "#fff") + path(d.y, "#ff0");

  // daily signal dots along the top edge
  const dots = [772, 785, 791, 798, 804, 811, 818, 824, 833, 849, 862, 870, 887, 895, 903, 925, 941, 949, 957, 964, 979, 994, 1001, 1008, 1015, 1022, 1032, 1040, 1058, 1066, 1073, 1095, 1102, 1110, 1117, 1125, 1132, 1143, 1156, 1197, 1218, 1226, 1250, 1266, 1274, 1281, 1288, 1295, 1304, 1316, 1342, 1350, 1357, 1380, 1396, 1403, 1410, 1418, 1433, 1442, 1456];
  out += path(dots.map(x => rect(Math.round(1340 + x / 2.24), 31, 2, 33)).join(""), "#f0f");

  out += line(79, 540, 1723, 576, "#8a8a40", 'stroke-width="3"') + line(79, 540, 1723, 576, "#ffff80", 'stroke-width="2"');
  out += path(rect(1722, 530, 3, 1016), "#808040") + path(rect(1722, 530, 2, 1016), "#ffff80");
  out += '<path d="M1723 517l6 19q-6-4-12 0z" fill="#ffff80"/>';
  out += '<path d="M1715 907l3 7 8 1-6 5 2 8-7-4-6 4 2-8-6-5 8-1z" fill="#555"/><path d="M1714 904l3 8h7l-6 5 3 8-7-5-7 5 3-8-6-5h7z" fill="#ffff80"/>';
  out += '<path d="M0 659l7 13v28l-7 14z" fill="#505050" stroke="#888"/><path d="M1 680l5 6-5 6z" fill="#d89000"/>';
  out += line(1953, 87, 1972, 83, "#fff") + '<path d="M1967 80l6 3-5 4M762 950l-5 3 5 3M757 953h10" stroke="#fff" fill="none"/>';
  for (const x of [187, 1107, 1946]) out += `<path d="M${x - 3} 1005l3-3 3 3z" fill="#f00"/>`;
  byId("price").innerHTML = out;
}

function drawVolume() {
  let out = "";
  for (const y of [1062, 1113, 1164, 1214, 1265]) out += line(0, y + .5, 2004, y + .5, "#980000", DOTS);
  months.slice(1).forEach(([x]) => out += line(x + .5, 1035, x + .5, 1315, "#880000", SPARSE));
  const d = { r: "", g: "" };
  for (const run of volumeRuns) for (const item of run.data.split(",")) {
    const [, x, c, y] = item.match(/(\d+)([rg])(\d+)/);
    d[c] += rect(Math.round(run.x + x / run.kx) - 1, Math.round(run.y + y / run.ky), 3, 1315);
  }
  out += path(d.r, "#ff3200") + path(d.g, "#32f5a5");
  const bands = [
    ["#f00", 1128, 1181, 1241, 1263, 1251, 1206],
    ["#c0f8ff", 1211, 1240, 1273, 1286, 1279, 1254],
    ["#ff0", 1280, 1290, 1301, 1306, 1303, 1295],
    ["#fff", 1298, 1303, 1308, 1310, 1309, 1305]
  ];
  const steps = [0, 858, 1236, 1425, 1604, 1651];
  const ends = [858, 1236, 1425, 1604, 1651, 1990];
  for (const [color, ...ys] of bands) {
    const pts = ys.map((y, i) => `${steps[i] + (i ? 5 : 0)},${y + .5} ${ends[i]},${y + .5}`).join(" ");
    out += `<polyline points="${pts}" fill="none" stroke="${color}" stroke-dasharray="3 2" shape-rendering="crispEdges"/>`;
  }
  out += path(rect(0, 1315, 1990, 1316), "#fff");
  out += path(rect(1722, 1016, 3, 1180), "#808040") + path(rect(1722, 1016, 2, 1180), "#ffff80");
  byId("volume").innerHTML = out;
}

function drawIntraday() {
  let out = "";
  for (let i = 1; i < 30; i++) {
    const y = Math.round(418 + i * 30.9) + .5;
    out += i === 21 + 1 || i === 21 ? "" : "";
    out += i === 11 * 2 || i === 21 + 1 ? line(2056, y, 2484, y) : line(2056, y, 2484, y, "#900000", 'stroke-dasharray="1 2" shape-rendering="crispEdges"');
  }
  out += line(2056, 758.5, 2484, 758.5);
  for (const x of [2164.5, 2378.5]) out += line(x, 420, x, 1340, "#900000", DOTS);
  out += line(2056, 418.5, 2485, 418.5) + line(2269.5, 418, 2269.5, 1340) + line(2484.5, 418, 2484.5, 1340);
  const scaled = s => s.split(" ").map(p => { const [x, y] = p.split(","); return `${2030 + x / 3},${400 + y / 3}`; }).join(" ");
  out += `<polyline points="${scaled(intradayPrice)}" fill="none" stroke="#fff" stroke-width="2"/>`;
  out += `<polyline points="${scaled(intradayAverage)}" fill="none" stroke="#ff0" shape-rendering="crispEdges"/>`;
  const d = { r: "", g: "", w: "" };
  for (const item of minuteVolumes.split(",")) {
    const [, x, c, y] = item.match(/(\d+)([rgw])(\d+)/);
    d[c] += rect(Math.round(1560 + x / 1.613), Math.round(980 + y / 3), 1, 1340);
  }
  out += path(d.r, "#ff3838") + path(d.g, "#00c800") + path(d.w, "#fff") + path(rect(2484, 1252, 1, 1340), "#fff");
  byId("intraday").innerHTML = out;
}

function fillLabels() {
  byId("priceAxis").innerHTML = "116.3 104.7 94.24 84.82 76.34 68.70 61.83 55.65 50.08 45.08 40.57 36.51 32.86 29.57 26.62 23.96 21.56 19.40 17.46 15.72 14.15"
    .split(" ").map(v => `<li>${v}</li>`).join("");
  byId("intradayAxis").innerHTML = "127.99 126.93 125.87 124.82 123.76 122.70 121.64 120.58 119.52 118.47 117.41 116.35 115.29 114.23 113.18 112.12 111.06 110.00 108.94 107.88 106.83 105.77 2400 2100 1800 1500 1200 900 600 300"
    .split(" ").map((v, i) => `<li class="${i < 11 ? "r" : i === 11 ? "" : i < 22 ? "g" : "y"}">${v}</li>`).join("");

  const dates = byId("dates");
  dates.style.gridTemplateColumns = months.map(([x], i) => `minmax(0, ${(months[i + 1] || [2004])[0] - x}fr)`).join(" ");
  dates.innerHTML = months.map(([, m]) => `<li>${m}</li>`).join("");

  const book = rows => rows.map(([p, w, n]) =>
    `<li><span>${p}</span><span class="bar-size" style="width:${w}px"></span><output>${n}</output></li>`).join("");
  byId("asks").innerHTML = book([["117.46", 4, 1], ["117.45", 64, 19], ["117.44", 17, 5], ["117.42", 20, 6], ["117.41", 4, 1]]);
  byId("bids").innerHTML = book([["117.40", 273, 82], ["117.39", 7, 2], ["117.35", 10, 3], ["117.34", 10, 3], ["117.33", 17, 5]]);

  const notes = [
    ["magenta", 417, 769, "大小非"], ["magenta", 788, 953, "公开发行"], ["", 786, 953, "14.03"], ["magenta", 1820, 486, "公开发行"], ["", 1932, 88, "120.50"],
    ["signal", 187, 1010, "S"], ["signal", 1107, 1010, "S"], ["signal", 1946, 1010, "S"],
    ["tag green", 1754, 1008, "跌"], ["tag navy", 1856, 1008, "财"], ["tag brown", 1970, 1008, "榜"], ["tag green", 1979, 1008, "减"]
  ];
  byId("notes").innerHTML = notes.map(([c, x, y, t]) =>
    `<span class="note ${c}" style="left:${(x / 20.04).toFixed(2)}%;top:${((y - 30) / 9.86).toFixed(2)}%">${t}</span>`).join("");
}

drawPrice();
drawVolume();
drawIntraday();
fillLabels();
```
